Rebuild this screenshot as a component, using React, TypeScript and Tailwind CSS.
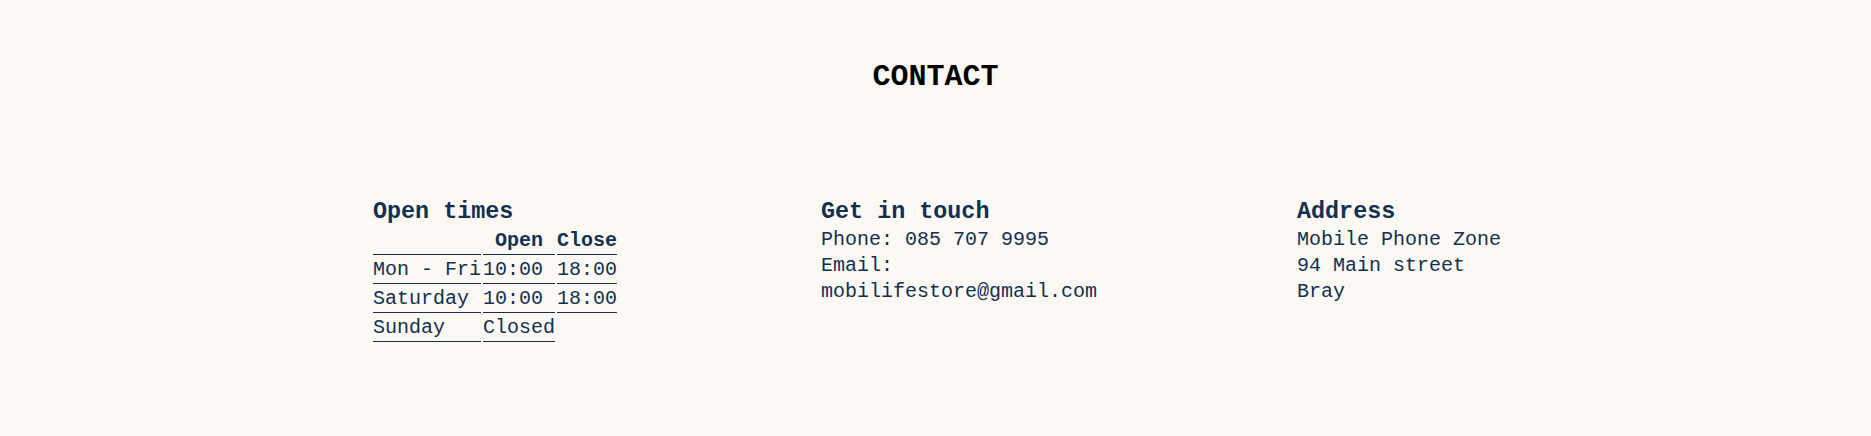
const hours = [
  { day: "Mon - Fri", open: "10:00", close: "18:00" },
  { day: "Saturday", open: "10:00", close: "18:00" },
  { day: "Sunday", open: "Closed", close: null },
];

export default function App() {
  return (
    <div
      className="min-h-screen whitespace-nowrap bg-[#fcf9f5] text-[20px] leading-[26px] text-[#12304f]"
      style={{ fontFamily: '"Liberation Mono", "DejaVu Sans Mono", monospace' }}
    >
      <h2 className="pt-[59px] text-center text-[30px] font-bold leading-[36px] text-black">
        CONTACT
      </h2>

      <div className="mt-[102px] flex justify-center gap-[200px] pl-[3px]">
        <div className="w-[245px]">
          <h3 className="text-[23.4px] font-bold leading-[30px]">Open times</h3>
          <table className="-ml-[2px] -mt-[1px] border-separate border-spacing-[2px]">
            <thead>
              <tr>
                <th className="w-[108px] border-b border-[#12304f] p-0 leading-[26px]"></th>
                <th className="w-[72px] border-b border-[#12304f] p-0 text-center font-bold leading-[26px]">
                  Open
                </th>
                <th className="w-[60px] border-b border-[#12304f] p-0 text-center font-bold leading-[26px]">
                  Close
                </th>
              </tr>
            </thead>
            <tbody>
              {hours.map((h) => (
                <tr key={h.day}>
                  <td className="border-b border-[#12304f] p-0 leading-[26px]">{h.day}</td>
                  <td className="border-b border-[#12304f] p-0 leading-[26px]">{h.open}</td>
                  {h.close ? (
                    <td className="border-b border-[#12304f] p-0 leading-[26px]">{h.close}</td>
                  ) : (
                    <td className="p-0"></td>
                  )}
                </tr>
              ))}
            </tbody>
          </table>
        </div>

        <div className="ml-[3px] w-[276px]">
          <h3 className="text-[23.4px] font-bold leading-[30px]">Get in touch</h3>
          <p>Phone: 085 707 9995</p>
          <p>Email:</p>
          <p>mobilifestore@gmail.com</p>
        </div>

        <div className="w-[204px]">
          <h3 className="text-[23.4px] font-bold leading-[30px]">Address</h3>
          <p>Mobile Phone Zone</p>
          <p>94 Main street</p>
          <p>Bray</p>
        </div>
      </div>
    </div>
  );
}
